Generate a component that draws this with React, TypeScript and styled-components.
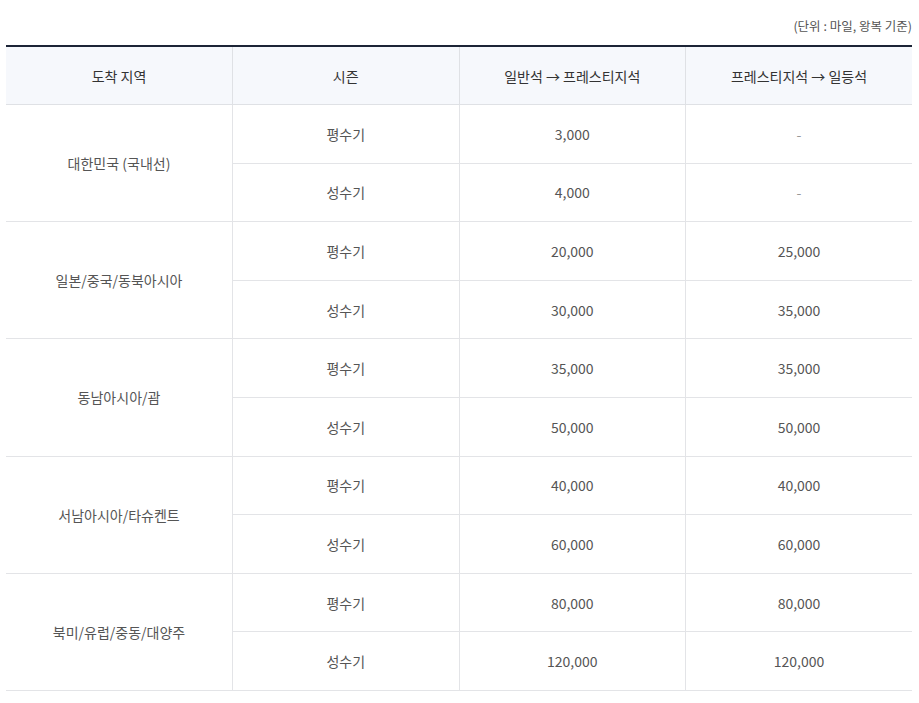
import styled, { createGlobalStyle } from 'styled-components';

const GlobalStyle = createGlobalStyle`
  html, body {
    margin: 0;
    padding: 0;
    background: #fff;
    font-family: "Noto Sans CJK KR", "Noto Sans", sans-serif;
  }
`;

const rows = [
  { region: '대한민국 (국내선)', low: ['3,000', '-'], peak: ['4,000', '-'] },
  { region: '일본/중국/동북아시아', low: ['20,000', '25,000'], peak: ['30,000', '35,000'] },
  { region: '동남아시아/괌', low: ['35,000', '35,000'], peak: ['50,000', '50,000'] },
  { region: '서남아시아/타슈켄트', low: ['40,000', '40,000'], peak: ['60,000', '60,000'] },
  { region: '북미/유럽/중동/대양주', low: ['80,000', '80,000'], peak: ['120,000', '120,000'] },
];

export default function App() {
  return (
    <>
      <GlobalStyle />
      <Page>
        <Unit>(단위 : 마일, 왕복 기준)</Unit>
        <Table>
          <thead>
            <tr>
              <Th>도착 지역</Th>
              <Th>시즌</Th>
              <Th>일반석 → 프레스티지석</Th>
              <Th>프레스티지석 → 일등석</Th>
            </tr>
          </thead>
          <tbody>
            {rows.map(r => [
              <tr key={`${r.region}-low`}>
                <Td rowSpan={2}>{r.region}</Td>
                <Td>평수기</Td>
                <Td>{r.low[0]}</Td>
                <Td $dash={r.low[1] === '-'}>{r.low[1]}</Td>
              </tr>,
              <tr key={`${r.region}-peak`}>
                <Td>성수기</Td>
                <Td>{r.peak[0]}</Td>
                <Td $dash={r.peak[1] === '-'}>{r.peak[1]}</Td>
              </tr>,
            ])}
          </tbody>
        </Table>
      </Page>
    </>
  );
}

const Page = styled.div`
  padding: 16px 7px 0 6px;
`;

const Unit = styled.p`
  margin: 0 0 10px;
  text-align: right;
  font-size: 12.5px;
  line-height: 19px;
  color: #555;
`;

const Table = styled.table`
  width: 100%;
  border-collapse: collapse;
  table-layout: fixed;
  border-top: 2px solid #1c2436;
`;

const Th = styled.th`
  height: 57px;
  padding: 0;
  background: #f6f8fc;
  border-bottom: 1px solid #dfe1e5;
  border-left: 1px solid #dfe1e5;
  font-size: 14px;
  font-weight: 400;
  color: #333;
  text-align: center;
  vertical-align: middle;

  &:first-child {
    border-left: none;
  }
`;

const Td = styled.td<{ $dash?: boolean }>`
  height: 57.6px;
  padding: 0;
  border-bottom: 1px solid #e3e4e7;
  border-left: 1px solid #e3e4e7;
  font-size: 14px;
  color: ${p => (p.$dash ? '#999' : '#555')};
  text-align: center;
  vertical-align: middle;

  tr > &:first-child[rowspan] {
    border-left: none;
  }
`;
